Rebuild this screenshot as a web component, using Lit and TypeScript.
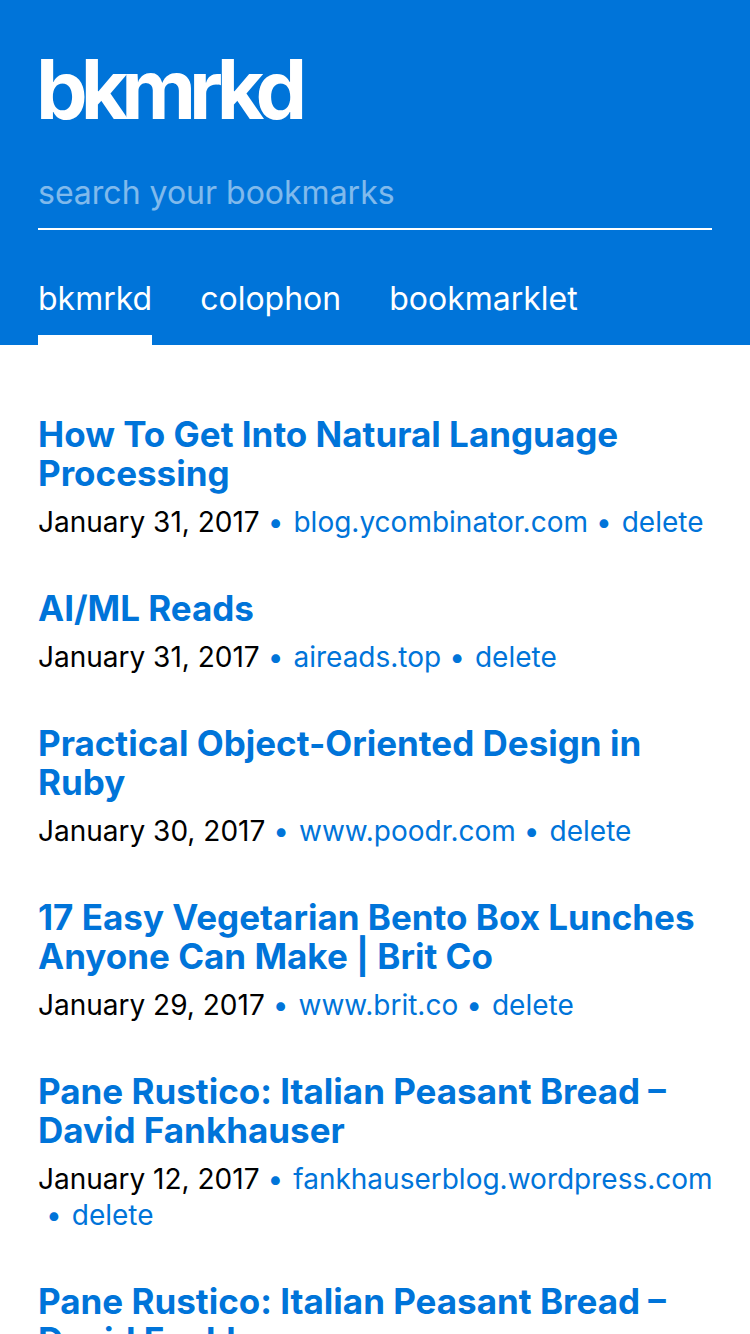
import { LitElement, html, css } from "lit";
import { customElement, state } from "lit/decorators.js";

interface Bookmark {
  title: string;
  date: string;
  site: string;
}

const BOOKMARKS: Bookmark[] = [
  { title: "How To Get Into Natural Language Processing", date: "January 31, 2017", site: "blog.ycombinator.com" },
  { title: "AI/ML Reads", date: "January 31, 2017", site: "aireads.top" },
  { title: "Practical Object-Oriented Design in Ruby", date: "January 30, 2017", site: "www.poodr.com" },
  { title: "17 Easy Vegetarian Bento Box Lunches Anyone Can Make | Brit Co", date: "January 29, 2017", site: "www.brit.co" },
  { title: "Pane Rustico: Italian Peasant Bread – David Fankhauser", date: "January 12, 2017", site: "fankhauserblog.wordpress.com" },
  { title: "Pane Rustico: Italian Peasant Bread – David Fankhauser", date: "January 12, 2017", site: "fankhauserblog.wordpress.com" },
];

@customElement("app-root")
export class AppRoot extends LitElement {
  static styles = css`
    :host {
      display: block;
      height: 100vh;
      overflow-y: auto;
      scrollbar-width: none;
      background: #fff;
      color: #000;
      font-family: Inter, "Liberation Sans", sans-serif;
    }
    a {
      color: #0074d9;
      text-decoration: none;
    }
    .header {
      background: #0074d9;
      padding: 46px 38px 0;
    }
    .logo {
      margin: 0 0 0 -2px;
      font-size: 82px;
      line-height: 88px;
      font-weight: 700;
      letter-spacing: -7px;
    }
    .logo a,
    .nav a {
      color: #fff;
    }
    .search {
      display: block;
      box-sizing: border-box;
      width: 100%;
      height: 72px;
      margin-top: 24px;
      padding: 0 0 2px;
      border: 0;
      border-bottom: 2px solid #fff;
      border-radius: 0;
      outline: none;
      background: transparent;
      color: #fff;
      font: inherit;
      font-size: 32px;
    }
    .search::placeholder {
      color: #fff;
      opacity: 0.5;
    }
    .nav {
      display: flex;
      gap: 48px;
      margin-top: 49px;
    }
    .nav a {
      font-size: 32px;
      line-height: 40px;
      padding-bottom: 16px;
      border-bottom: 10px solid transparent;
    }
    .nav a.active {
      border-color: #fff;
    }
    .list {
      list-style: none;
      margin: 0;
      padding: 70px 36px 70px 38px;
      display: grid;
      gap: 49px;
    }
    .title {
      margin: 0;
      font-size: 35px;
      line-height: 39px;
      font-weight: 700;
    }
    .meta {
      display: flex;
      flex-wrap: wrap;
      margin: 11px 0 0;
      padding: 0;
      list-style: none;
      font-size: 28px;
      line-height: 36px;
    }
    .part::before {
      content: "•";
      color: #0074d9;
      margin: 0 10px 0 8px;
    }
  `;

  @state() private bookmarks = BOOKMARKS;

  private remove(item: Bookmark, e: Event) {
    e.preventDefault();
    this.bookmarks = this.bookmarks.filter((b) => b !== item);
  }

  render() {
    return html`
      <header class="header">
        <h1 class="logo"><a href="#">bkmrkd</a></h1>
        <input class="search" type="search" aria-label="search your bookmarks" placeholder="search your bookmarks" />
        <nav class="nav">
          <a class="active" href="#">bkmrkd</a>
          <a href="#colophon">colophon</a>
          <a href="#bookmarklet">bookmarklet</a>
        </nav>
      </header>
      <ul class="list">
        ${this.bookmarks.map(
          (b) => html`<li>
            <h2 class="title"><a href="#">${b.title}</a></h2>
            <ul class="meta">
              <li>${b.date}</li>
              <li class="part"><a href="#">${b.site}</a></li>
              <li class="part"><a href="#" @click=${(e: Event) => this.remove(b, e)}>delete</a></li>
            </ul>
          </li>`
        )}
      </ul>
    `;
  }
}
